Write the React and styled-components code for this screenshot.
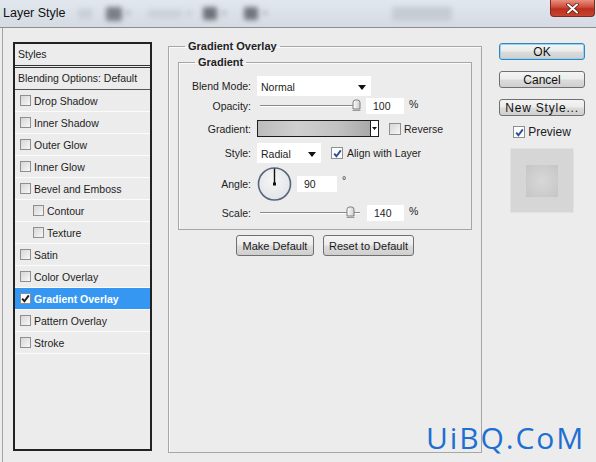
import React from 'react';
import styled, { createGlobalStyle, css } from 'styled-components';

const GlobalStyle = createGlobalStyle`
  html, body {
    margin: 0;
    padding: 0;
  }
  body {
    background: #ececec;
    font-family: "Liberation Sans", Arial, sans-serif;
    font-size: 10.5px;
    color: #1d1d1d;
  }
`;

const Window = styled.div`
  position: relative;
  width: 596px;
  height: 462px;
  overflow: hidden;
  display: flex;
  flex-direction: column;
  background: #ececec;
`;

const TitleBar = styled.div`
  flex: none;
  height: 27px;
  display: flex;
  align-items: flex-start;
  background: linear-gradient(#e2e7ee, #d5dbe3);
  border-bottom: 1px solid #8d8d8d;
`;

const TitleText = styled.div`
  padding-left: 3px;
  line-height: 27px;
  font-size: 12.5px;
  color: #111;
`;

const Blob = styled.div`
  flex: none;
  width: ${p => p.$w}px;
  height: ${p => p.$h}px;
  margin: ${p => p.$mt}px 0 0 ${p => p.$ml}px;
  background: ${p => p.$c};
  filter: blur(2.5px);
  border-radius: 2px;
`;

const CloseButton = styled.div`
  flex: none;
  margin-left: auto;
  margin-right: 1px;
  width: 45px;
  height: 17px;
  box-sizing: border-box;
  border: 1px solid #7e2a20;
  border-top: none;
  border-radius: 0 0 4px 4px;
  background: linear-gradient(#e9907f, #cf4b3a 45%, #b9301f 55%, #c8452f);
  display: flex;
  align-items: center;
  justify-content: center;
`;

const Body = styled.div`
  flex: 1;
  display: flex;
  align-items: flex-start;
  margin-left: 2px;
  border-left: 1px solid #a3a3a3;
  padding: 14px 0 0 10px;
`;

const StylesPanel = styled.div`
  flex: none;
  width: 139px;
  height: 409px;
  box-sizing: border-box;
  border: 2px solid #222;
  background: #ececec;
`;

const PanelHeader = styled.div`
  height: 21px;
  line-height: 21px;
  padding-left: 3px;
  border-bottom: 3px double #333;
`;

const BlendRow = styled.div`
  height: 21px;
  line-height: 21px;
  padding-left: 3px;
  border-bottom: 1px solid #555;
`;

const StyleRow = styled.div`
  height: 21px;
  display: flex;
  align-items: center;
  gap: 3px;
  padding-left: ${p => (p.$indent ? 18 : 5)}px;
  border-bottom: 1px solid #fbfbfb;
  ${p => p.$selected && css`
    background: #3697f2;
    color: #fff;
    font-weight: bold;
  `}
`;

const Box = styled.span`
  flex: none;
  width: ${p => p.$size || 11}px;
  height: ${p => p.$size || 11}px;
  box-sizing: border-box;
  border: 1px solid #8e8f90;
  background: ${p => (p.$checked ? '#fdfdfd' : 'linear-gradient(135deg, #d6d6d6, #f7f7f7)')};
  display: flex;
  align-items: center;
  justify-content: center;
`;

const Check = ({ checked, size, color = '#2d4c9e' }) => (
  <Box $checked={checked} $size={size}>
    {checked && (
      <svg width="9" height="9" viewBox="0 0 9 9">
        <path d="M1.2 4.6 L3.4 7.2 L7.8 1.4" fill="none" stroke={color} strokeWidth="1.9" />
      </svg>
    )}
  </Box>
);

const Group = styled.fieldset`
  flex: none;
  margin: -2px 0 0 16px;
  width: 313px;
  height: 413px;
  box-sizing: border-box;
  border: 1px solid #a6a6a6;
  box-shadow: inset 1px 1px 0 #fbfbfb;
  padding: 3px 9px 0 9px;
  display: flex;
  flex-direction: column;
`;

const InnerGroup = styled.fieldset`
  margin: 0;
  width: 294px;
  height: 174px;
  box-sizing: border-box;
  border: 1px solid #a6a6a6;
  box-shadow: inset 1px 1px 0 #fbfbfb;
  padding: 7px 0 0 0;
`;

const Legend = styled.legend`
  margin-left: ${p => p.$ml}px;
  padding: 0 3px;
  font-weight: bold;
  font-size: 11px;
  line-height: 13px;
  color: #222;
`;

const Row = styled.div`
  display: flex;
  align-items: center;
  height: ${p => p.$h}px;
  margin-top: ${p => p.$mt || 0}px;
`;

const Label = styled.span`
  flex: none;
  width: 72px;
  margin-right: 6px;
  text-align: right;
`;

const Select = styled.div`
  flex: none;
  width: ${p => p.$w}px;
  height: 20px;
  box-sizing: border-box;
  background: #fff;
  display: flex;
  align-items: center;
  justify-content: space-between;
  padding: 2px 5px 0 4px;
`;

const Arrow = () => (
  <svg width="8" height="5" viewBox="0 0 8 5">
    <path d="M0 0 H8 L4 5 Z" fill="#111" />
  </svg>
);

const SliderWrap = styled.div`
  position: relative;
  flex: none;
  width: 105px;
  height: 16px;
  margin-right: ${p => p.$gap}px;
`;

const Track = styled.div`
  position: absolute;
  left: 3px;
  right: 2px;
  top: 7px;
  height: 1px;
  background: #8a8a8a;
  box-shadow: 0 1px 0 #fff;
`;

const ThumbSpot = styled.div`
  position: absolute;
  top: 1px;
  left: ${p => p.$x}px;
  width: 9px;
  height: 13px;
`;

const Slider = ({ x, gap = 4 }) => (
  <SliderWrap $gap={gap}>
    <Track />
    <ThumbSpot $x={x}>
      <svg width="9" height="13" viewBox="0 0 9 13">
        <defs>
          <linearGradient id="th" x1="0" x2="1">
            <stop offset="0" stopColor="#fdfdfd" />
            <stop offset="1" stopColor="#cfcfcf" />
          </linearGradient>
        </defs>
        <path d="M1 3.5 Q1 1 3.5 1 H5.5 Q8 1 8 3.5 V10 H1 Z" fill="url(#th)" stroke="#7d7d7d" />
        <path d="M0.5 11.5 H8.5" stroke="#9a9a9a" />
      </svg>
    </ThumbSpot>
  </SliderWrap>
);

const NumInput = styled.div`
  flex: none;
  width: ${p => p.$w || 38}px;
  height: 16px;
  box-sizing: border-box;
  background: #fff;
  padding-left: 7px;
  line-height: 17px;
`;

const Unit = styled.span`
  margin-left: 5px;
  align-self: ${p => (p.$sup ? 'flex-start' : 'center')};
  margin-top: ${p => (p.$sup ? 8 : 0)}px;
  margin-bottom: 4px;
`;

const Swatch = styled.div`
  flex: none;
  width: 113px;
  height: 17px;
  box-sizing: border-box;
  border: 1px solid #1e1e1e;
  border-right: none;
  background: linear-gradient(90deg, #bcbcbc 0%, #cfcfcf 35%, #c2c2c2 70%, #a9a9a9 100%);
`;

const SwatchArrow = styled.div`
  flex: none;
  width: 9px;
  height: 17px;
  box-sizing: border-box;
  border: 1px solid #1e1e1e;
  background: #fff;
  display: flex;
  align-items: center;
  justify-content: center;
`;

const Inline = styled.span`
  margin-left: ${p => p.$ml}px;
  display: flex;
  align-items: center;
  gap: ${p => p.$gap || 3}px;
`;

const Dial = styled.div`
  flex: none;
  width: 36px;
  height: 36px;
  margin-right: 4px;
`;

const ButtonRow = styled.div`
  display: flex;
  justify-content: center;
  gap: 9px;
  margin-top: 5px;
`;

const PushButton = styled.div`
  width: ${p => p.$w}px;
  height: 21px;
  box-sizing: border-box;
  border: 1px solid #707070;
  border-radius: 3px;
  background: linear-gradient(#f4f4f4 0%, #ececec 48%, #dcdcdc 52%, #cfcfcf 100%);
  display: flex;
  align-items: center;
  justify-content: center;
  font-size: 11px;
  color: #1b1b1b;
`;

const SideColumn = styled.div`
  flex: none;
  width: 86px;
  margin: 1px 0 0 17px;
  display: flex;
  flex-direction: column;
  align-items: center;
  font-size: 12px;
`;

const DialogButton = styled.div`
  width: 86px;
  height: 17px;
  margin-bottom: 11px;
  box-sizing: border-box;
  border: 1px solid ${p => (p.$primary ? '#3b84b6' : '#707070')};
  border-radius: 3px;
  background: linear-gradient(#f4f4f4 0%, #ececec 48%, #dcdcdc 52%, #cfcfcf 100%);
  box-shadow: ${p => (p.$primary ? 'inset 0 0 0 1px #8fd6f4' : 'none')};
  display: flex;
  align-items: center;
  justify-content: center;
  letter-spacing: ${p => p.$spacing || 0}px;
  color: #111;
`;

const PreviewToggle = styled.div`
  display: flex;
  align-items: center;
  gap: 3px;
  margin-top: -2px;
`;

const PreviewBox = styled.div`
  width: 64px;
  height: 65px;
  margin-top: 9px;
  box-sizing: border-box;
  border: 1px solid #e2e2e2;
  background: #d6d6d6;
  display: flex;
  align-items: center;
  justify-content: center;
`;

const PreviewSquare = styled.div`
  width: 32px;
  height: 32px;
  background: radial-gradient(circle, #d7d7d7 0%, #cdcdcd 60%, #c5c5c5 100%);
`;

const Watermark = styled.div`
  position: absolute;
  left: 426px;
  top: 417px;
  font-family: "Open Sans", "Noto Sans", sans-serif;
  font-size: 30px;
  letter-spacing: 1.9px;
  color: #1d6fd2;
`;

const styleItems = [
  { name: 'Drop Shadow' },
  { name: 'Inner Shadow' },
  { name: 'Outer Glow' },
  { name: 'Inner Glow' },
  { name: 'Bevel and Emboss' },
  { name: 'Contour', indent: true },
  { name: 'Texture', indent: true },
  { name: 'Satin' },
  { name: 'Color Overlay' },
  { name: 'Gradient Overlay', selected: true },
  { name: 'Pattern Overlay' },
  { name: 'Stroke' },
];

export default function App() {
  return (
    <Window>
      <GlobalStyle />
      <TitleBar>
        <TitleText>Layer Style</TitleText>
        <Blob $w={14} $h={10} $mt={9} $ml={12} $c="#c9cfd7" />
        <Blob $w={16} $h={14} $mt={7} $ml={14} $c="#7b8088" />
        <Blob $w={4} $h={4} $mt={11} $ml={4} $c="#9da3ab" />
        <Blob $w={34} $h={8} $mt={10} $ml={18} $c="#cad0d8" />
        <Blob $w={4} $h={4} $mt={11} $ml={5} $c="#b2b8c0" />
        <Blob $w={14} $h={13} $mt={7} $ml={12} $c="#6f747b" />
        <Blob $w={4} $h={4} $mt={11} $ml={5} $c="#9da3ab" />
        <Blob $w={14} $h={13} $mt={7} $ml={18} $c="#72777e" />
        <Blob $w={4} $h={4} $mt={11} $ml={5} $c="#9da3ab" />
        <Blob $w={60} $h={14} $mt={7} $ml={125} $c="#c6ccd4" />
        <CloseButton>
          <svg width="13" height="11" viewBox="0 0 13 11">
            <path d="M2 1.5 L11 9.5 M11 1.5 L2 9.5" stroke="#5a1a12" strokeWidth="3.6" strokeLinecap="round" />
            <path d="M2 1.5 L11 9.5 M11 1.5 L2 9.5" stroke="#fff" strokeWidth="2" strokeLinecap="round" />
          </svg>
        </CloseButton>
      </TitleBar>

      <Body>
        <StylesPanel>
          <PanelHeader>Styles</PanelHeader>
          <BlendRow>Blending Options: Default</BlendRow>
          {styleItems.map(item => (
            <StyleRow key={item.name} $indent={item.indent} $selected={item.selected}>
              <Check checked={item.selected} color="#1b1b1b" />
              <span>{item.name}</span>
            </StyleRow>
          ))}
        </StylesPanel>

        <Group>
          <Legend $ml={7}>Gradient Overlay</Legend>
          <InnerGroup>
            <Legend $ml={16}>Gradient</Legend>
            <Row $h={20}>
              <Label>Blend Mode:</Label>
              <Select $w={114}>
                <span>Normal</span>
                <Arrow />
              </Select>
            </Row>
            <Row $h={16} $mt={2}>
              <Label>Opacity:</Label>
              <Slider x={95} />
              <NumInput>100</NumInput>
              <Unit>%</Unit>
            </Row>
            <Row $h={17} $mt={6}>
              <Label>Gradient:</Label>
              <Swatch />
              <SwatchArrow>
                <svg width="5" height="3" viewBox="0 0 5 3">
                  <path d="M0 0 H5 L2.5 3 Z" fill="#111" />
                </svg>
              </SwatchArrow>
              <Inline $ml={10}>
                <Check checked={false} size={12} />
                <span>Reverse</span>
              </Inline>
            </Row>
            <Row $h={20} $mt={6}>
              <Label>Style:</Label>
              <Select $w={64}>
                <span>Radial</span>
                <Arrow />
              </Select>
              <Inline $ml={10} $gap={4}>
                <Check checked size={12} />
                <span>Align with Layer</span>
              </Inline>
            </Row>
            <Row $h={36} $mt={3}>
              <Label>Angle:</Label>
              <Dial>
                <svg width="36" height="36" viewBox="0 0 36 36">
                  <defs>
                    <radialGradient id="dialFill" cx="0.45" cy="0.4" r="0.6">
                      <stop offset="0" stopColor="#f6f6f6" />
                      <stop offset="1" stopColor="#e2e4e8" />
                    </radialGradient>
                  </defs>
                  <circle cx="17.5" cy="18" r="16" fill="url(#dialFill)" stroke="#56657a" strokeWidth="1.6" />
                  <line x1="17.5" y1="18" x2="17.5" y2="2.5" stroke="#111" strokeWidth="1.4" />
                  <rect x="16" y="16.5" width="3" height="3" fill="#111" />
                </svg>
              </Dial>
              <NumInput $w={40}>90</NumInput>
              <Unit $sup>°</Unit>
            </Row>
            <Row $h={16} $mt={3}>
              <Label>Scale:</Label>
              <Slider x={89} gap={5} />
              <NumInput $w={37}>140</NumInput>
              <Unit>%</Unit>
            </Row>
          </InnerGroup>
          <ButtonRow>
            <PushButton $w={78}>Make Default</PushButton>
            <PushButton $w={91}>Reset to Default</PushButton>
          </ButtonRow>
        </Group>

        <SideColumn>
          <DialogButton $primary>OK</DialogButton>
          <DialogButton>Cancel</DialogButton>
          <DialogButton $spacing={0.8}>New Style...</DialogButton>
          <PreviewToggle>
            <Check checked size={12} />
            <span>Preview</span>
          </PreviewToggle>
          <PreviewBox>
            <PreviewSquare />
          </PreviewBox>
        </SideColumn>
      </Body>

      <Watermark>UiBQ.CoM</Watermark>
    </Window>
  );
}
